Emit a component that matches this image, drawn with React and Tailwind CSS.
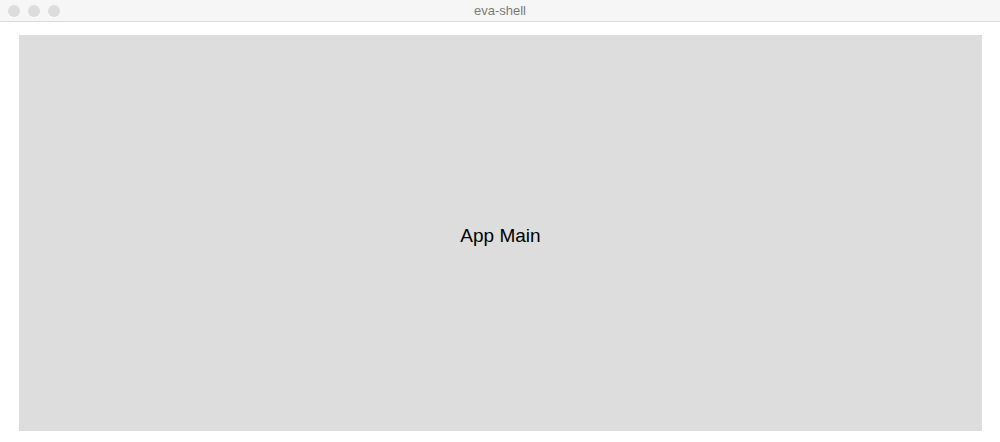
export default function App() {
  return (
    <div className="w-[1000px] h-[442px] bg-white flex flex-col overflow-hidden" style={{ fontFamily: '"Liberation Sans", Arial, sans-serif' }}>
      <div className="relative h-[22px] shrink-0 bg-[#f6f6f6] border-b border-[#d9d9d9] flex items-center justify-center">
        <div className="absolute left-[8px] top-[5px] flex gap-[8px]">
          <span className="w-[12px] h-[12px] rounded-full bg-[#dcdcdc]" />
          <span className="w-[12px] h-[12px] rounded-full bg-[#dcdcdc]" />
          <span className="w-[12px] h-[12px] rounded-full bg-[#dcdcdc]" />
        </div>
        <span className="text-[13px] leading-none text-[#7a7a7a]">eva-shell</span>
      </div>
      <div className="flex-1 pt-[13px] pl-[19px] pr-[18px] pb-[11px]">
        <div className="w-full h-full bg-[#dddddd] flex items-center justify-center">
          <span className="text-[19px] text-black leading-none mt-[4px]">App Main</span>
        </div>
      </div>
    </div>
  );
}
